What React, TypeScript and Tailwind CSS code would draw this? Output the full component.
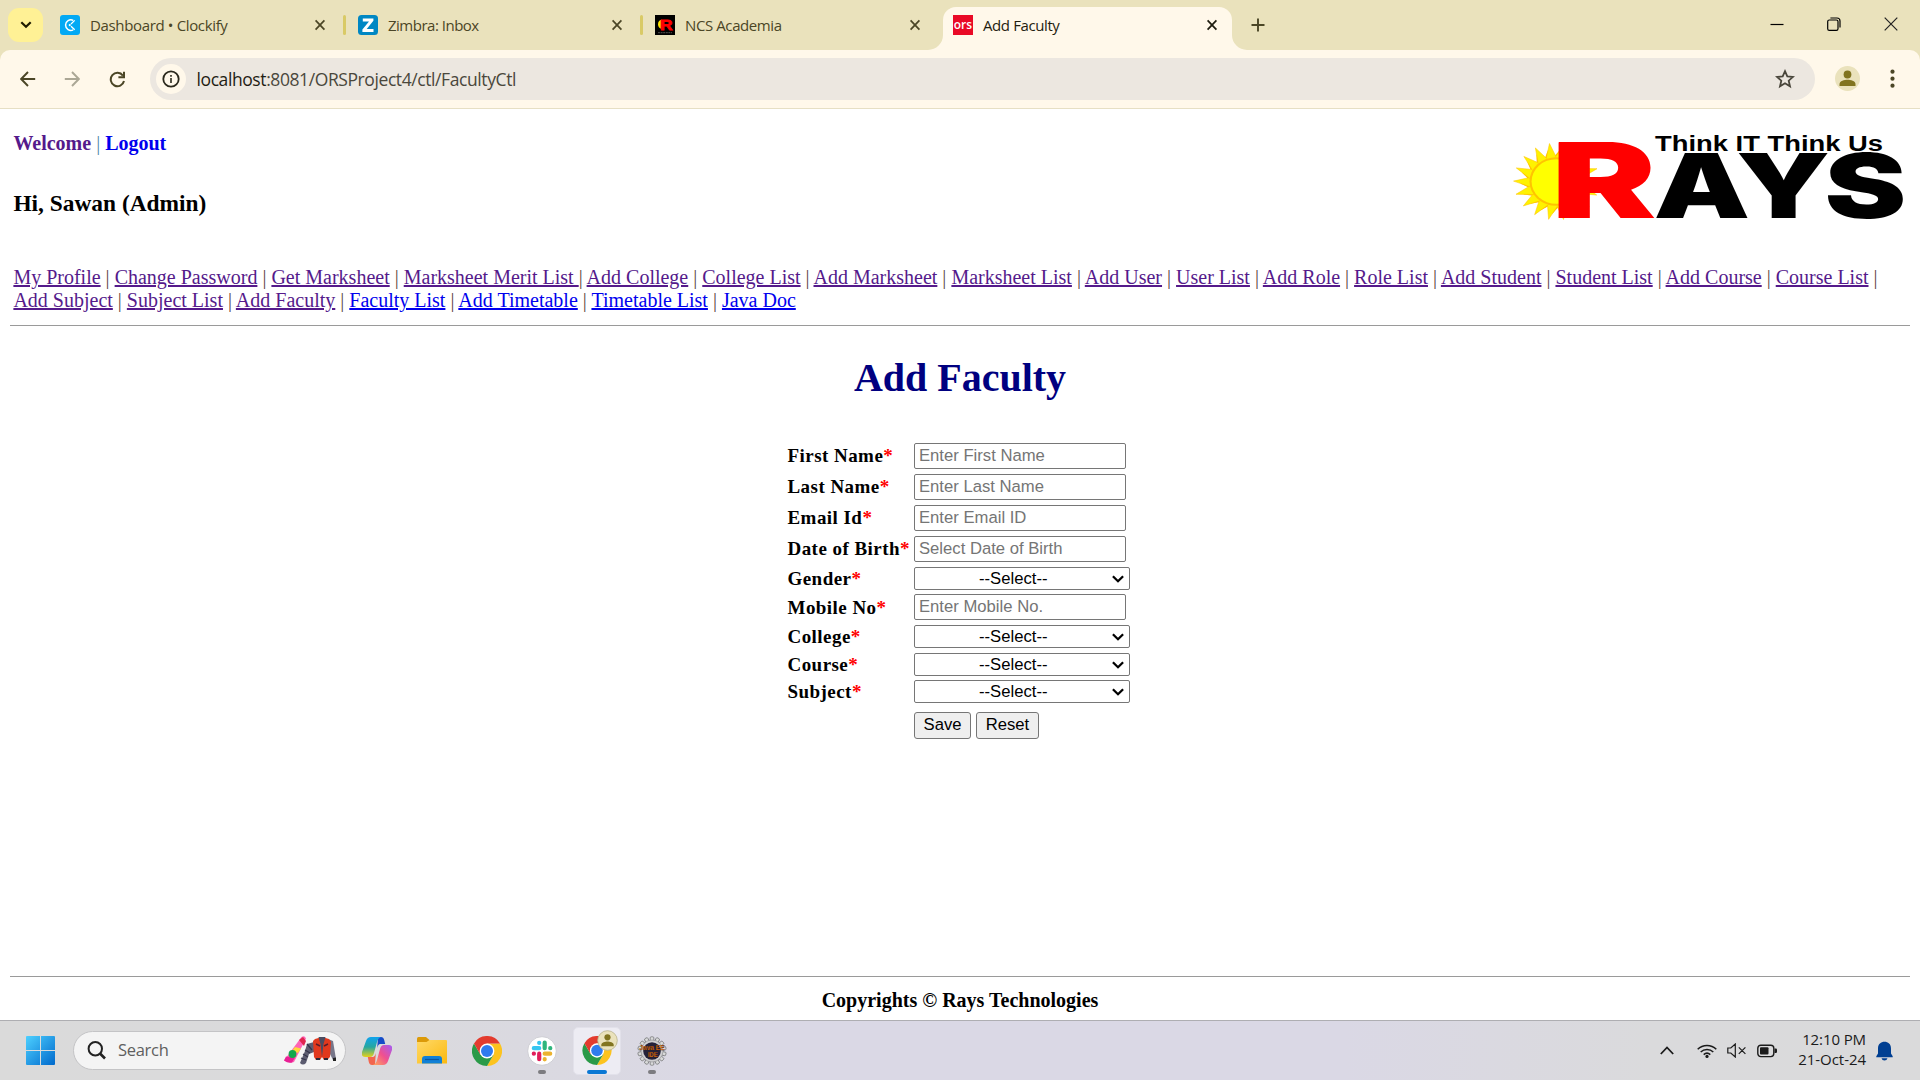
import React from "react";

const ui = "font-['Open_Sans','Noto_Sans',sans-serif]";

function CloseX({ dark = false }: { dark?: boolean }) {
  return (
    <svg width="12" height="12" viewBox="0 0 12 12" fill="none" stroke={dark ? "#1f1d10" : "#4b4626"} strokeWidth="1.7">
      <path d="M1.600 1.300l8.800 9.400M10.400 1.300l-8.800 9.400" />
    </svg>
  );
}

function Tab({ icon, title, width, spacing }: { icon: React.ReactNode; title: string; width: string; spacing: string }) {
  return (
    <div className={`flex h-[50px] items-center ${width}`}>
      <span className="size-5 shrink-0">{icon}</span>
      <span className={`ml-[10px] flex-1 whitespace-nowrap text-[15px] text-[#4b4626] ${spacing}`}>{title}</span>
      <CloseX />
      <span className="ml-[17px] h-5 w-[3px] rounded-full bg-[#d9ca66]" />
    </div>
  );
}

function ClockifyIcon() {
  return (
    <svg width="20" height="20" viewBox="0 0 20 20" fill="none">
      <rect width="20" height="20" rx="3" fill="#03a9f4" />
      <path d="M13.2 5.3A5.3 5.3 0 1 0 13.2 14.8" stroke="#fff" strokeWidth="1.5" />
      <path d="M11 9l3.7-3.6M11 11.2l3.7 3.6" stroke="#fff" strokeWidth="1.3" />
      <circle cx="9.8" cy="10.1" r="1.1" fill="#fff" />
    </svg>
  );
}

function ZimbraIcon() {
  return (
    <svg width="20" height="20" viewBox="0 0 20 20">
      <rect width="20" height="20" rx="3.5" fill="#0087c3" />
      <path d="M4.8 3.5h10.6v2.3L8.7 14h6.8v3H4.4v-2.4L11 6.5H4.8z" fill="#fff" />
    </svg>
  );
}

function NcsIcon() {
  return (
    <svg width="20" height="20" viewBox="0 0 20 20">
      <rect width="20" height="20" fill="#000" />
      <path d="M6.5 4.500a5 5 0 0 0 0 9.500z" fill="#ffe600" />
      <text x="5" y="14.500" fontSize="15.500" fontWeight="900" fill="#f00" stroke="#f00" strokeWidth=".8" fontFamily="Liberation Sans" textLength="12.500" lengthAdjust="spacingAndGlyphs">R</text>
      <path d="M3 17.700h14" stroke="#666" strokeWidth=".8" strokeDasharray="2 .6" />
    </svg>
  );
}

function OrsIcon() {
  return (
    <svg width="20" height="20" viewBox="0 0 20 20">
      <rect width="20" height="20" fill="#e90a26" />
      <text x=".8" y="14" fontSize="12" fontWeight="600" fill="#fff" fontFamily="Open Sans" textLength="18.200" lengthAdjust="spacingAndGlyphs">ors</text>
    </svg>
  );
}

function TabStrip() {
  return (
    <div className={`flex h-[50px] bg-[#eae2bc] ${ui}`}>
      <div className="ml-2 mt-2 flex h-[34px] w-[35px] items-center justify-center rounded-[11px] bg-[#fff195]">
        <svg width="12" height="8" viewBox="0 0 12 8" fill="none" stroke="#1f1c00" strokeWidth="2.200"><path d="M1.300 1.200L6 5.800l4.700-4.600" /></svg>
      </div>
      <div className="w-[17px]" />
      <Tab icon={<ClockifyIcon />} title="Dashboard • Clockify" width="w-[286px]" spacing="tracking-[-0.350px]" />
      <div className="w-[12px]" />
      <Tab icon={<ZimbraIcon />} title="Zimbra: Inbox" width="w-[285px]" spacing="tracking-[-0.500px]" />
      <div className="w-[12px]" />
      <div className="flex h-[50px] w-[273px] items-center">
        <NcsIcon />
        <span className="ml-[10px] flex-1 whitespace-nowrap text-[15px] tracking-[-0.400px] text-[#4b4626]">NCS Academia</span>
        <CloseX />
        <span className="w-[7px]" />
      </div>
      <svg className="mt-[35px]" width="15" height="15" viewBox="0 0 15 15"><path d="M15 0v15H0A15 15 0 0 0 15 0z" fill="#fff8ea" /></svg>
      <div className="mt-[7px] flex h-[43px] w-[289px] items-center rounded-t-[13px] bg-[#fff8ea] pb-[7px] pl-[10px] pr-[14px]">
        <OrsIcon />
        <span className="ml-[10px] flex-1 whitespace-nowrap text-[15px] tracking-[-0.400px] text-[#1f1d10]">Add Faculty</span>
        <CloseX dark />
      </div>
      <svg className="mt-[35px]" width="15" height="15" viewBox="0 0 15 15"><path d="M0 0v15h15A15 15 0 0 1 0 0z" fill="#fff8ea" /></svg>
      <svg className="ml-[4px] mt-[18px]" width="14" height="14" viewBox="0 0 14 14" stroke="#4b4626" strokeWidth="1.900"><path d="M7 .5v13M.5 7h13" /></svg>
      <div className="ml-auto flex items-center gap-[43px] pb-[2px] pr-[22px]">
        <svg width="14" height="14" viewBox="0 0 14 14" stroke="#000" strokeWidth="1.200"><path d="M.5 7.500h13" /></svg>
        <svg width="14" height="14" viewBox="0 0 14 14" fill="none" stroke="#000" strokeWidth="1.200"><rect x=".7" y="3" width="10.300" height="10.300" rx="1.600" /><path d="M3.400 1H10a3 3 0 0 1 3 3v6.400" /></svg>
        <svg width="14" height="14" viewBox="0 0 14 14" stroke="#222" strokeWidth="1.200"><path d="M.7.7l12.600 12.600M13.300.7L.7 13.300" /></svg>
      </div>
    </div>
  );
}

function Toolbar() {
  return (
    <div className="bg-[#eae2bc]">
      <div className={`flex h-[59px] items-center rounded-t-[10px] border-b border-[#e6dfc4] bg-[#fff8ea] ${ui}`}>
        <svg className="ml-5" width="16" height="16" viewBox="0 0 16 16" fill="none" stroke="#4b4626" strokeWidth="1.900"><path d="M15.200 8H1.500M8 1L1.200 8 8 15" /></svg>
        <svg className="ml-[28px]" width="16" height="16" viewBox="0 0 16 16" fill="none" stroke="#aba795" strokeWidth="1.900"><path d="M.8 8h13.700M8 1l6.800 7L8 15" /></svg>
        <svg className="ml-[29px]" width="17" height="17" viewBox="0 0 17 17" fill="none" stroke="#4b4626" strokeWidth="2"><path d="M13.900 4.600A6.700 6.700 0 1 0 15 10M15 .8v5.500H9.400" /></svg>
        <div className="ml-[24px] flex h-[42px] w-[1665px] items-center rounded-full bg-[#ece7e0] pl-[6px] pr-[20px]">
          <div className="flex size-[30px] items-center justify-center rounded-full bg-[#fff8ea]">
            <svg width="18" height="18" viewBox="0 0 18 18" fill="none" stroke="#2a281c"><circle cx="9" cy="9" r="7.700" strokeWidth="1.800" /><path d="M9 8v5M9 5v1.700" strokeWidth="1.600" /></svg>
          </div>
          <span className="ml-[10.500px] text-[17.500px] tracking-[-0.410px] text-[#4a473c]"><span className="text-[#1f1d14]">localhost</span>:8081/ORSProject4/ctl/FacultyCtl</span>
          <svg className="ml-auto" width="20" height="20" viewBox="0 0 20 20" fill="none" stroke="#4a473c" strokeWidth="1.800"><path d="M10 2.200l2.300 5.200 5.700.5-4.300 3.800 1.300 5.600-5-3-5 3 1.300-5.600L2 7.900l5.700-.5z" /></svg>
        </div>
        <svg className="ml-5" width="26" height="26" viewBox="0 0 26 26"><circle cx="12.500" cy="12.500" r="12.500" fill="#eae2bc" /><circle cx="12.500" cy="8.500" r="3.900" fill="#817420" /><path d="M4.500 20v-2c0-3 5-4.300 8-4.300s8 1.300 8 4.300v2z" fill="#817420" /></svg>
        <svg className="ml-[29px]" width="5" height="20" viewBox="0 0 5 20" fill="#4b4626"><circle cx="2.500" cy="2.700" r="2.100" /><circle cx="2.500" cy="9.700" r="2.100" /><circle cx="2.500" cy="16.700" r="2.100" /></svg>
      </div>
    </div>
  );
}

function RaysLogo() {
  const rays = Array.from({ length: 18 }, (_, i) => i * 20);
  return (
    <svg className="overflow-visible" width="400" height="100" viewBox="0 0 400 100">
      <g transform="translate(46.500 51.500) scale(1.060 .95)">
        {rays.map((a) => (
          <path key={a} d="M-6 -23L2 -34L7 -23Z" fill="#ffb900" transform={`rotate(${a + 3})`} />
        ))}
        {rays.map((a) => (
          <path key={a} d="M-7 -23L-1 -40.500L4 -23Z" fill="#fff200" stroke="#ffc400" strokeWidth=".5" transform={`rotate(${a - 8})`} />
        ))}
        <circle r="25.500" fill="#ffc400" />
        <circle r="23.500" fill="#ffff00" />
      </g>
      <path d="M48.700 12.500h30V88h-30z" fill="#f00" />
      <g fontFamily="Inter, sans-serif" fontWeight="900">
        <text transform="translate(41.400 88) scale(1.510 1)" fontSize="104" fill="#f00">R</text>
        <text transform="translate(143.400 88) scale(1.367 1)" fontSize="89">A</text>
        <text transform="translate(226 88) scale(1.367 1)" fontSize="89">Y</text>
        <text transform="translate(314.500 88) scale(1.380 1)" fontSize="89">S</text>
      </g>
      <text x="145" y="21" fontSize="21.500" fontWeight="700" fontFamily="Liberation Sans" textLength="228" lengthAdjust="spacingAndGlyphs">Think IT Think Us</text>
    </svg>
  );
}

const visited = ["My Profile", "Change Password", "Get Marksheet", "Marksheet Merit List ", "Add College", "College List", "Add Marksheet", "Marksheet List", "Add User", "User List", "Add Role", "Role List", "Add Student", "Student List", "Add Course", "Course List"];
const second = ["Add Subject", "Subject List", "Add Faculty", "Faculty List", "Add Timetable", "Timetable List", "Java Doc"];

function Menu() {
  return (
    <nav className="pl-[13.400px] text-[20px] leading-[23px] text-black">
      <div className="whitespace-pre">
        {visited.map((t) => (
          <React.Fragment key={t}>
            <a className="text-[#551a8b] underline">{t}</a>
            <span className="text-[#5d4a44]">{t.endsWith(" ") ? "| " : " | "}</span>
          </React.Fragment>
        ))}
      </div>
      <div className="whitespace-pre">
        {second.map((t, i) => (
          <React.Fragment key={t}>
            {i > 0 && <span className="text-[#5d4a44]"> | </span>}
            <a className={i < 3 ? "text-[#551a8b] underline" : "text-[#0000ee] underline"}>{t}</a>
          </React.Fragment>
        ))}
      </div>
    </nav>
  );
}

function Field({ label, placeholder, height, leading = "leading-[25px]" }: { label: string; placeholder?: string; height: string; leading?: string }) {
  return (
    <div className={`flex items-start ${height}`}>
      <label className={`w-[126.500px] whitespace-nowrap text-[19px] font-bold tracking-[0.450px] ${leading}`}>
        {label}<span className="text-[#f00]">*</span>
      </label>
      {placeholder ? (
        <div className="h-[26px] w-[212px] rounded-[2px] border border-[#767676] pl-[4px] font-['Liberation_Sans',Arial,sans-serif] text-[16.670px] leading-[23px] text-[#757575]">{placeholder}</div>
      ) : (
        <div className="flex h-[23px] w-[216px] items-center rounded-[2px] border border-[#767676] pr-[5px] font-['Liberation_Sans',Arial,sans-serif] text-[16.670px] leading-[21px]">
          <span className="ml-[64px] flex-1">--Select--</span>
          <svg width="12" height="8" viewBox="0 0 12 8" fill="none" stroke="#000" strokeWidth="2.300"><path d="M.9 1.200L6 6.200l5.100-5" /></svg>
        </div>
      )}
    </div>
  );
}

function Page() {
  return (
    <main className="flex h-[911px] flex-col bg-white font-['Liberation_Serif','Times_New_Roman',serif] text-black">
      <div className="flex h-[157px] justify-between">
        <div className="pl-[13.400px]">
          <div className="mt-[23px] text-[20px] font-bold leading-[23px]">
            <span className="text-[#551a8b]">Welcome</span>
            <span className="font-normal text-[#58a]"> | </span>
            <span className="text-[#0000ee]">Logout</span>
          </div>
          <h3 className="mt-[35px] text-[23.400px] font-bold leading-[27px]">Hi, Sawan (Admin)</h3>
        </div>
        <div className="mr-[10px] mt-[21px]"><RaysLogo /></div>
      </div>
      <Menu />
      <hr className="mx-[10px] mt-[13px] border-t border-[#9a9a9a]" />
      <h1 className="mt-[29px] text-center text-[40px] font-bold leading-[46px] text-[#000080]">Add Faculty</h1>
      <form className="ml-[787.500px] mt-[42px]">
        <Field label="First Name" placeholder="Enter First Name" height="h-[31px]" />
        <Field label="Last Name" placeholder="Enter Last Name" height="h-[31px]" />
        <Field label="Email Id" placeholder="Enter Email ID" height="h-[31px]" />
        <Field label="Date of Birth" placeholder="Select Date of Birth" height="h-[31px]" />
        <Field label="Gender" height="h-[27px]" leading="leading-[23px]" />
        <Field label="Mobile No" placeholder="Enter Mobile No." height="h-[31px]" leading="leading-[27px]" />
        <Field label="College" height="h-[28px]" leading="leading-[23px]" />
        <Field label="Course" height="h-[27px]" leading="leading-[23px]" />
        <Field label="Subject" height="h-[32px]" leading="leading-[23px]" />
        <div className="ml-[126.500px] flex gap-[5px] font-['Liberation_Sans',Arial,sans-serif] text-[16.670px] leading-[24px]">
          <div className="h-[27px] w-[57px] rounded-[3px] border border-[#767676] bg-[#efefef] text-center">Save</div>
          <div className="h-[27px] w-[63px] rounded-[3px] border border-[#767676] bg-[#efefef] text-center">Reset</div>
        </div>
      </form>
      <footer className="mx-[10px] mt-auto h-[44px] border-t border-[#9a9a9a] pt-[11px] text-center text-[20px] font-bold leading-[24px]">Copyrights © Rays Technologies</footer>
    </main>
  );
}

function ChromeIcon() {
  return (
    <svg width="30" height="30" viewBox="0 0 30 30">
      <path d="M15 7.500H28A15 15 0 0 1 15 30l6.500-11.200z" fill="#fcc31e" />
      <path d="M2 7.500L8.500 18.800 21.500 18.800 15 30A15 15 0 0 1 2 7.500z" fill="#2a9a48" />
      <path d="M15 7.500H28A15 15 0 0 0 2 7.500L8.500 18.800z" fill="#e33b2e" />
      <circle cx="15" cy="15" r="7.400" fill="#fff" />
      <circle cx="15" cy="15" r="6" fill="#2f7bee" />
    </svg>
  );
}

function Taskbar() {
  const teeth = Array.from({ length: 14 }, (_, i) => (i * 360) / 14);
  return (
    <div className={`flex h-[60px] items-center border-t border-[#aeaeb2] bg-[linear-gradient(90deg,#dadada_0%,#dadadc_18%,#dad8e5_38%,#dad8e5_70%,#dadadc_86%,#dadadb_100%)] ${ui}`}>
      <svg className="ml-[26px]" width="29" height="29" viewBox="0 0 29 29">
        <defs><linearGradient id="win" gradientUnits="userSpaceOnUse" x1="0" y1="0" x2="29" y2="29"><stop stopColor="#4dd0ff" /><stop offset="1" stopColor="#0069cc" /></linearGradient></defs>
        <path d="M1 0h13v14H0V1a1 1 0 0 1 1-1zM15 0h13a1 1 0 0 1 1 1v13H15zM0 15h14v14H1a1 1 0 0 1-1-1zM15 15h14v13a1 1 0 0 1-1 1H15z" fill="url(#win)" />
      </svg>
      <div className="mb-px ml-[18px] flex h-[39px] w-[273px] items-center rounded-full border border-[#c4c4c6] bg-[#f4f4f4] pl-[13px] pr-[8px]">
        <svg width="19" height="19" viewBox="0 0 19 19" fill="none" stroke="#222"><circle cx="8.300" cy="7.800" r="6.700" strokeWidth="2" /><path d="M13 12.500l5 5" strokeWidth="2.600" /></svg>
        <span className="ml-[12px] flex-1 pt-px text-[16.500px] tracking-[-0.300px] text-[#5f5f5f]">Search</span>
        <svg width="54" height="30" viewBox="0 0 54 30">
          <path d="M18.500 2q3-2 4.500 1.500L11 27q-5 1.500-10-1.500z" fill="#ff64b5" />
          <path d="M16 5l5 6 2-5-3-4z" fill="#e0254f" /><path d="M12 12l6 1.500-3 4.500-6-2z" fill="#ffd83b" />
          <path d="M1 25.500l2-4 9 1-3 5q-4 1-8-2z" fill="#e81f95" /><circle cx="9.500" cy="19" r="3.900" fill="#12a84c" />
          <path d="M31 7v10l-5 2-3 9q-3 3-6 0l5-12 2-7z" fill="#5c5c70" /><path d="M24 9l5 6M22 15l5 3M20 19l5 3M18 23l5 2" stroke="#34344a" strokeWidth="1.200" />
          <path d="M45 4l5 2 3 18-3 1-5-10z" fill="#77778a" /><path d="M50 23l3-.5V26h-3z" fill="#222" />
          <path d="M32 4q7-3 14 0l2 3-1 15-3 3h-3l-2-3-2 3h-4l-2-3-1-16z" fill="#e1381d" />
          <path d="M35.500 2h7l-2 7-1.500 13-1.500-13z" fill="#4b4b60" /><path d="M33 9l4 2M45 9l-4 2" stroke="#5a1c28" strokeWidth="1.500" />
          <path d="M33 24h4M41 24h4" stroke="#282838" strokeWidth="2" />
        </svg>
      </div>
      <div className="ml-[7px] flex gap-[7px]">
        <div className="flex size-12 items-center justify-center">
          <svg width="30" height="28" viewBox="0 0 30 28">
            <defs>
              <linearGradient id="cpA" x1="0" y1="0" x2="0" y2="1"><stop stopColor="#10a3ee" /><stop offset=".5" stopColor="#26a7a0" /><stop offset="1" stopColor="#e6d11a" /></linearGradient>
              <linearGradient id="cpB" x1="1" y1="0" x2="0" y2="1"><stop stopColor="#a35cf5" /><stop offset=".5" stopColor="#f0508f" /><stop offset="1" stopColor="#ffab5a" /></linearGradient>
            </defs>
            <path d="M16 0h3q2.500 0 3.200 3l1 4h-5q-2 0-3 4z" fill="#174bc8" />
            <path d="M13 28h-3q-2.500 0-3.200-3l-1-5h5q2 0 3-4z" fill="#f2664f" />
            <path d="M9 0h10q-3 1-4 5l-3 11q-1 4-4 4H3q-4 0-3-5L4 4q1.300-4 5-4z" fill="url(#cpA)" />
            <path d="M21 28H11q3-1 4-5l3-11q1-4 4-4h5q4 0 3 5l-4 11q-1.300 4-5 4z" fill="url(#cpB)" />
          </svg>
        </div>
        <div className="flex size-12 items-center justify-center">
          <svg width="30" height="27" viewBox="0 0 30 27">
            <defs><linearGradient id="fold" x1="0" y1="0" x2="1" y2="1"><stop stopColor="#ffd968" /><stop offset="1" stopColor="#fbb90f" /></linearGradient></defs>
            <path d="M0 1.500Q0 0 1.500 0H9l4 3.500L10 6H0z" fill="#dc9a08" />
            <path d="M0 5h9.500l3-2H29q1 0 1 1v22.500H0z" fill="url(#fold)" />
            <path d="M5 26.500V22q0-3 3-3h14q3 0 3 3v4.500z" fill="#1180d6" /><path d="M8 22.500h14" stroke="#0a56a0" strokeWidth="1.200" />
          </svg>
        </div>
        <div className="flex size-12 items-center justify-center"><ChromeIcon /></div>
        <div className="flex size-12 flex-col items-center pt-[9px]">
          <svg width="30" height="30" viewBox="0 0 30 30">
            <circle cx="15" cy="15" r="14.300" fill="#fff" stroke="#c8c8ce" strokeWidth=".8" />
            <g strokeWidth="4.200" strokeLinecap="round" fill="none">
              <path d="M12.200 6.800v.1M6.800 12.200h5.400" stroke="#36c5f0" /><path d="M17.700 6.500v5.700M23.200 12.200h.1" stroke="#2eb67d" />
              <path d="M6.800 17.700h.1M12.200 17.700v5.500" stroke="#e01e5a" /><path d="M17.700 17.700h5.500M17.700 23.200v.1" stroke="#ecb22e" />
            </g>
          </svg>
          <span className="mt-[4px] h-1 w-2 rounded-full bg-[#7c7c80]" />
        </div>
        <div className="relative flex size-12 flex-col items-center rounded-[5px] border border-[#e2e1ea] bg-[#edecf3] pt-[8px]">
          <ChromeIcon />
          <span className="mt-[5px] h-1 w-5 shrink-0 rounded-full bg-[#0a78d4]" />
          <svg className="absolute right-[2px] top-[2px]" width="21" height="21" viewBox="0 0 21 21"><circle cx="10.500" cy="10.500" r="9.800" fill="#eae2bc" stroke="#b9b28c" strokeWidth=".8" /><circle cx="10.500" cy="7.300" r="3.100" fill="#817420" /><path d="M4.300 16.300v-1.500c0-2.300 4-3.300 6.200-3.300s6.200 1 6.200 3.300v1.500z" fill="#817420" /></svg>
        </div>
        <div className="flex size-12 flex-col items-center pt-[9px]">
          <svg width="30" height="30" viewBox="0 0 30 30">
            {teeth.map((a) => (
              <rect key={a} x="13.200" y=".8" width="3.600" height="5" rx="1" fill="#d9dada" stroke="#77797a" strokeWidth=".8" transform={`rotate(${a} 15 15)`} />
            ))}
            <circle cx="15" cy="15" r="11" fill="#d0d0d2" stroke="#8b8c8e" strokeWidth=".6" />
            <circle cx="15" cy="15" r="8.800" fill="#25223a" />
            <g fontFamily="Liberation Sans" fontWeight="700" fontSize="7.500" fill="#f47a10" stroke="#3a1a08" strokeWidth=".25">
              <text x="2.500" y="14" textLength="25" lengthAdjust="spacingAndGlyphs">Java EE</text>
              <text x="11" y="20.500" textLength="9.500" lengthAdjust="spacingAndGlyphs">IDE</text>
            </g>
          </svg>
          <span className="mt-[4px] h-1 w-2 rounded-full bg-[#7c7c80]" />
        </div>
      </div>
      <div className="ml-auto flex items-center">
        <svg width="14" height="9" viewBox="0 0 14 9" fill="none" stroke="#1b1b1b" strokeWidth="1.800"><path d="M.8 8L7 1.500 13.200 8" /></svg>
        <svg className="ml-[23px]" width="20" height="16" viewBox="0 0 20 16" fill="none" stroke="#1b1b1b" strokeWidth="1.500"><path d="M.7 6.300a13 13 0 0 1 18.600 0M3.700 9a9 9 0 0 1 12.600 0M6.700 11.600a5 5 0 0 1 6.600 0" /><circle cx="10" cy="13.400" r="1.600" fill="#1b1b1b" stroke="none" /></svg>
        <svg className="ml-[10px]" width="20" height="15" viewBox="0 0 20 15" fill="none" stroke="#1b1b1b" strokeWidth="1.200"><path d="M.8 5v5h3l4.500 4V1L3.800 5zM11.800 4.300l6.600 6.600M18.400 4.300l-6.600 6.600" /></svg>
        <svg className="ml-[10px]" width="21" height="14" viewBox="0 0 21 14"><rect x=".8" y="1.200" width="16" height="11.400" rx="3" fill="none" stroke="#1b1b1b" strokeWidth="1.400" /><rect x="3" y="3.300" width="8.500" height="7.200" rx="1" fill="#1b1b1b" /><path d="M17.500 4.500h1.300q1.200 0 1.200 1v2.600q0 1-1.200 1h-1.300z" fill="#1b1b1b" /></svg>
        <div className="w-[88px] pb-[3px] text-right text-[15px] leading-[20px] tracking-[-0.050px] text-[#1b1b1b]">
          <div className="tracking-[-0.100px]">12:10 PM</div>
          <div>21-Oct-24</div>
        </div>
        <svg className="ml-[10px] mr-[27px]" width="17" height="20" viewBox="0 0 17 20" fill="#003f92"><path d="M2 12.500V7.500C2 3 5 .8 8.500.8S15 3 15 7.500v5l1.700 2.700v1H.3v-1zM5.500 17.300h6q-.6 2.200-3 2.200t-3-2.200z" /></svg>
      </div>
    </div>
  );
}

export default function App() {
  return (
    <div className="h-[1080px] w-[1920px] overflow-hidden bg-white">
      <TabStrip />
      <Toolbar />
      <Page />
      <Taskbar />
    </div>
  );
}
